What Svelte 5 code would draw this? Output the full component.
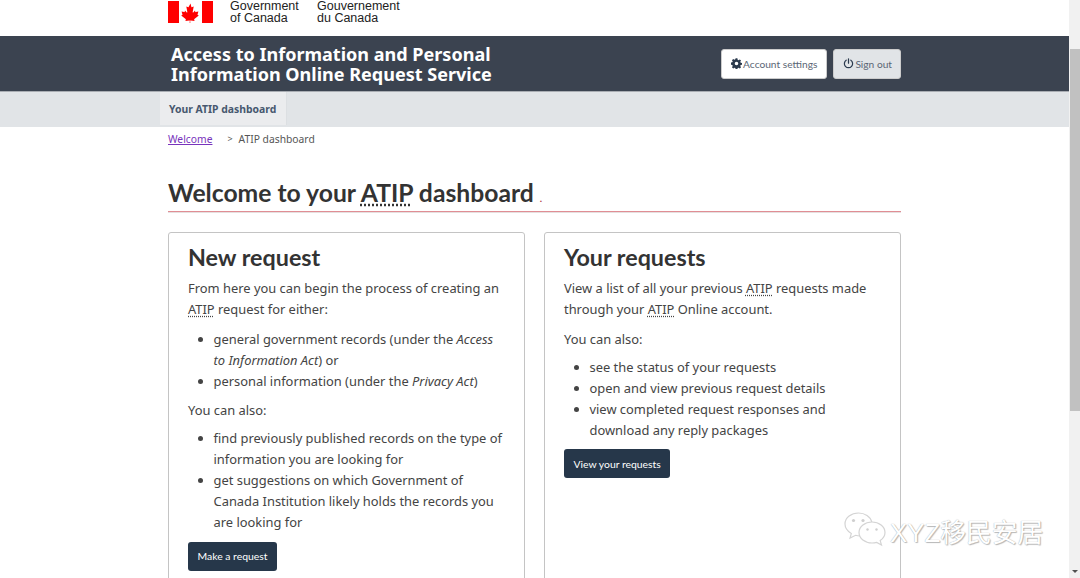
<script>
  const newItems = [
    'find previously published records on the type of information you are looking for',
    'get suggestions on which Government of Canada Institution likely holds the records you are looking for'
  ];
  const yourItems = [
    'see the status of your requests',
    'open and view previous request details',
    'view completed request responses and download any reply packages'
  ];
</script>

<div class="shell">
  <div class="page">
    <div class="gov-bar">
      <div class="container signature">
        <svg class="flag" viewBox="0 0 45 22" width="45" height="22" aria-label="Flag of Canada">
          <rect x="0" width="11" height="22" fill="#f00" />
          <rect x="34" width="11" height="22" fill="#f00" />
          <path
            fill="#f00"
            d="M22.5 2.5l-1.9 3.4c-.2.4-.6.3-.9.2l-1.4-.7 1 5.300c.2 1-.5 1-.8.6l-1.500-1.700-.3 1.200c0 .2-.2.4-.5.300l-2.600-.5.700 2.500c.1.500.3.800-.2 1l-.9.400 4.400 3.600c.2.100.3.400.2.700l-.4 1.200 4.100-.5c.1 0 .3.100.3.300l-.2 3.900h.8l-.2-3.900c0-.2.200-.3.300-.3l4.100.5-.4-1.200c-.1-.3 0-.6.200-.7l4.400-3.600-.9-.4c-.5-.2-.3-.5-.2-1l.7-2.500-2.600.5c-.3.100-.5-.1-.5-.3l-.3-1.200-1.500 1.700c-.3.400-1 .4-.8-.6l1-5.300-1.400.7c-.3.100-.7.200-.9-.2z"
          />
        </svg>
        <div class="sig-text">Government<br />of Canada</div>
        <div class="sig-text">Gouvernement<br />du Canada</div>
      </div>
    </div>

    <header class="app-header">
      <div class="container header-row">
        <div class="app-title">Access to Information and Personal<br />Information Online Request Service</div>
        <div class="header-actions">
          <button class="btn-light">
            <svg viewBox="0 0 16 16" width="11" height="11" aria-hidden="true">
              <path
                fill="#2b3a4d"
                fill-rule="evenodd"
                d="M6.700.5h2.600l.4 2 1.300.6 1.800-1.100 1.800 1.800-1.100 1.800.6 1.300 2 .4v2.600l-2 .4-.6 1.300 1.100 1.800-1.800 1.800-1.800-1.100-1.300.6-.4 2H6.700l-.4-2-1.300-.6-1.800 1.100-1.800-1.800 1.100-1.800-.6-1.300-2-.4V6.700l2-.4.6-1.300-1.100-1.800 1.800-1.800 1.800 1.100 1.300-.6zM8 5.400a2.600 2.600 0 1 0 0 5.200 2.600 2.600 0 0 0 0-5.200z"
              />
            </svg>
            Account settings
          </button>
          <button class="btn-grey">
            <svg viewBox="0 0 16 16" width="11" height="11" aria-hidden="true">
              <path fill="none" stroke="#2b3a4d" stroke-width="1.800" stroke-linecap="round" d="M8 1.200v6.300M4.600 3.200a6 6 0 1 0 6.800 0" />
            </svg>
            Sign out
          </button>
        </div>
      </div>
    </header>

    <nav class="tabs">
      <div class="tabs-inner">
        <span class="tab">Your ATIP dashboard</span>
      </div>
    </nav>

    <main class="container">
      <div class="breadcrumb">
        <a href="#welcome">Welcome</a>
        <span class="sep">&gt;</span>
        <span>ATIP dashboard</span>
      </div>

      <h1>Welcome to your <abbr>ATIP</abbr> dashboard <span class="dot">.</span></h1>

      <div class="cards">
        <section class="card">
          <h2>New request</h2>
          <p class="lead">From here you can begin the process of creating an <abbr>ATIP</abbr> request for either:</p>
          <ul>
            <li>general government records (under the <em>Access to Information Act</em>) or</li>
            <li>personal information (under the <em>Privacy Act</em>)</li>
          </ul>
          <p>You can also:</p>
          <ul>
            {#each newItems as item}
              <li>{item}</li>
            {/each}
          </ul>
          <button class="btn-dark">Make a request</button>
        </section>

        <section class="card">
          <h2>Your requests</h2>
          <p class="lead">View a list of all your previous <abbr>ATIP</abbr> requests made through your <abbr>ATIP</abbr> Online account.</p>
          <p>You can also:</p>
          <ul>
            {#each yourItems as item}
              <li>{item}</li>
            {/each}
          </ul>
          <button class="btn-dark">View your requests</button>
        </section>
      </div>
    </main>
  </div>

  <div class="scrollbar">
    <div class="thumb"></div>
    <div class="arrow"></div>
  </div>

  <div class="watermark">
    <svg viewBox="0 0 44 38" width="44" height="38" aria-hidden="true">
      <g fill="none" stroke="#d4d4d4" stroke-width="1.200">
        <path d="M17 25c-1.500 0-3-.2-4.400-.7L7 27l1.300-4.400C4.300 20 2 16.600 2 13 2 6.500 8.500 2 15.500 2c6.300 0 12 3.500 13.300 9" />
        <path d="M29 11c7 0 13 4.500 13 10.500 0 3.300-1.900 6-4.800 8.100L38.500 34l-4.800-2.600c-1.500.4-3.100.6-4.700.6-7 0-13-4.500-13-10.500S22 11 29 11z" fill="#fff" />
      </g>
      <g fill="#cfcfcf">
        <circle cx="10.500" cy="9.500" r="1.600" />
        <circle cx="20" cy="9.500" r="1.600" />
        <circle cx="24.500" cy="18.500" r="1.200" />
        <circle cx="33.500" cy="18.500" r="1.200" />
      </g>
    </svg>
    <span>XYZ移民安居</span>
  </div>
</div>

<style>
  :global(html),
  :global(body) {
    margin: 0;
    overflow: hidden;
    background: #fff;
  }

  .shell {
    position: relative;
    display: flex;
    width: 1080px;
    height: 578px;
    overflow: hidden;
    font-family: 'Noto Sans', sans-serif;
    color: #333;
  }

  .page {
    width: 1069px;
    flex: none;
  }

  .container {
    width: 733px;
    margin-left: 168px;
  }

  .gov-bar {
    height: 36px;
  }

  .signature {
    display: flex;
  }

  .flag {
    flex: none;
    margin: 1px 17px 0 0;
  }

  .sig-text {
    width: 87px;
    margin-top: -0.5px;
    font-family: 'Liberation Sans', sans-serif;
    font-size: 12.500px;
    line-height: 12.300px;
    color: #222;
  }

  .app-header {
    height: 55px;
    background: #3b4350;
    border-bottom: 1px solid #a9adb3;
  }

  .header-row {
    display: flex;
    justify-content: space-between;
    align-items: center;
    height: 55px;
  }

  .app-title {
    margin-left: 3px;
    font-weight: 700;
    font-size: 18.050px;
    line-height: 20px;
    color: #fff;
  }

  .header-actions {
    display: flex;
    gap: 6px;
  }

  .header-actions button {
    display: flex;
    align-items: center;
    gap: 1px;
    height: 30px;
    padding: 0 9px;
    border: 1px solid #ccc;
    border-radius: 3px;
    font-family: Lato, sans-serif;
    font-size: 10.200px;
    color: #5b6675;
  }

  .header-actions .btn-light {
    background: #fff;
  }

  .header-actions .btn-grey {
    padding-right: 8px;
    background: #e1e4e7;
  }

  .tabs {
    height: 35px;
    background: #e1e4e7;
  }

  .tabs-inner {
    margin-left: 160px;
    display: flex;
    height: 100%;
  }

  .tab {
    display: flex;
    align-items: center;
    width: 127px;
    height: 33px;
    box-sizing: border-box;
    padding-left: 9px;
    background: #ebecee;
    border-right: 1px solid #dcdfe2;
    font-size: 10.400px;
    font-weight: 700;
    color: #47586f;
  }

  .breadcrumb {
    display: flex;
    height: 25px;
    padding-top: 4px;
    font-size: 10.300px;
    line-height: 16px;
    color: #555;
  }

  .breadcrumb a {
    color: #7834bc;
  }

  .sep {
    margin: 0 6px 0 15px;
    font-size: 9px;
  }

  h1 {
    margin: 0;
    padding: 20px 0 1px;
    border-bottom: 1px solid #e08e94;
    box-shadow: 0 1px 0 #e6dfe0;
    font-family: Lato, sans-serif;
    font-weight: 700;
    font-size: 24.700px;
    line-height: 34px;
    color: #333;
  }

  .dot {
    font-size: 10px;
    line-height: 1;
    color: #af3c43;
  }

  abbr {
    text-decoration: underline dotted;
    text-underline-offset: 2px;
  }

  .cards {
    display: grid;
    grid-template-columns: 357px 357px;
    gap: 19px;
    margin-top: 20px;
  }

  .card {
    box-sizing: border-box;
    min-height: 420px;
    padding: 8px 19px 20px;
    border: 1px solid #c4c4c4;
    border-radius: 3px;
  }

  h2 {
    margin: 0 0 5px;
    font-family: Lato, sans-serif;
    font-weight: 700;
    font-size: 23.300px;
    line-height: 32px;
    color: #333;
  }

  p {
    margin: 0 0 7px;
    font-size: 12.900px;
    line-height: 21.100px;
    color: #444;
  }

  p.lead {
    margin-bottom: 8.500px;
  }

  ul {
    margin: 0 0 8px;
    padding-left: 25.500px;
    font-size: 12.900px;
    line-height: 21.100px;
    color: #444;
  }

  .btn-dark {
    display: block;
    height: 29px;
    margin-top: 4px;
    padding: 0 9.500px;
    border: none;
    border-radius: 3px;
    background: #26374a;
    font-family: Lato, sans-serif;
    font-size: 10.400px;
    color: #fff;
  }

  .scrollbar {
    position: relative;
    width: 11px;
    flex: none;
    background: #f1f1f1;
  }

  .thumb {
    position: absolute;
    top: 49px;
    left: 1px;
    right: 0;
    height: 362px;
    background: #c1c1c1;
  }

  .arrow {
    position: absolute;
    bottom: 5px;
    left: 3px;
    border: 3px solid transparent;
    border-top: 3px solid #505050;
    border-bottom: none;
  }

  .watermark {
    position: absolute;
    left: 843px;
    top: 511px;
    display: flex;
    align-items: center;
    gap: 3px;
    font-family: 'Liberation Sans', 'Noto Sans CJK SC', sans-serif;
    font-size: 25.800px;
    color: #fff;
    text-shadow: 0 0 1px #999, 1px 1px 1px #bbb;
  }
</style>
